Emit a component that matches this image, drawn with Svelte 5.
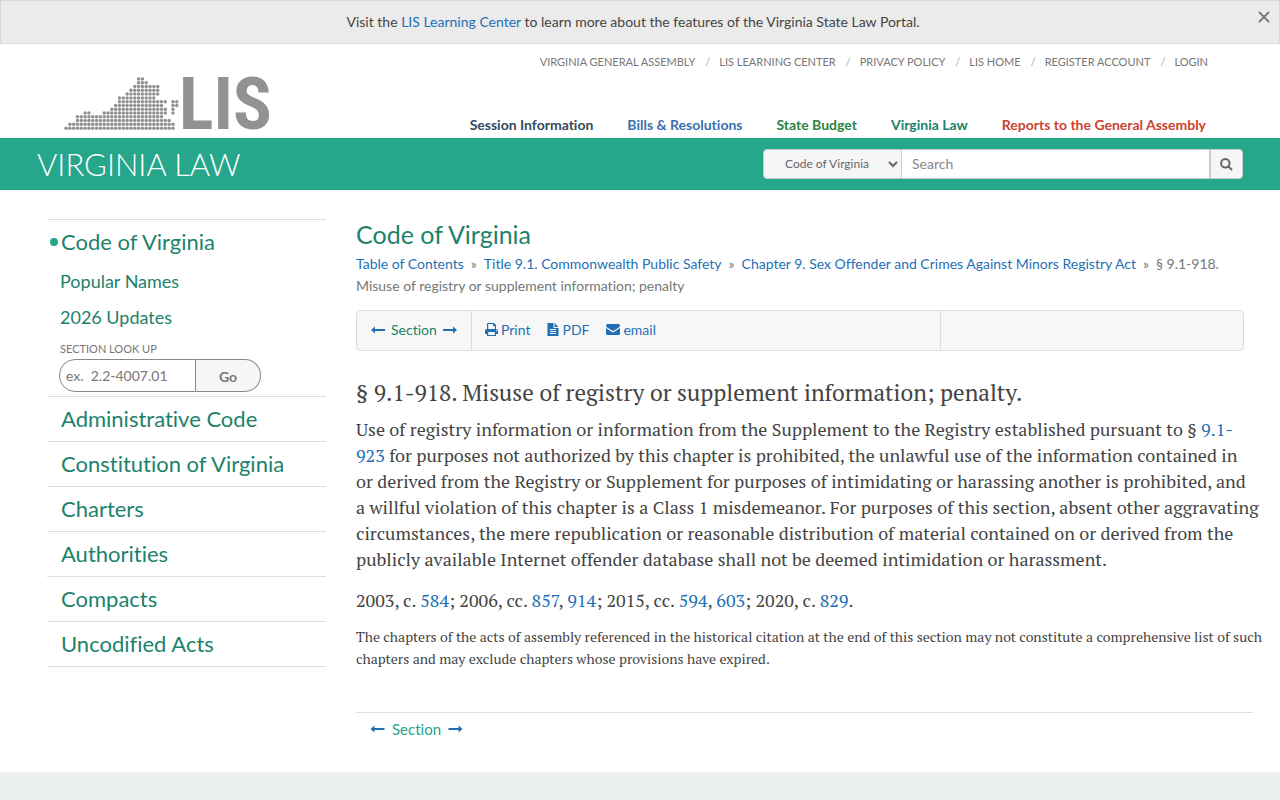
<script>
  const topLinks = [
    'Virginia General Assembly',
    'LIS Learning Center',
    'Privacy Policy',
    'LIS Home',
    'Register Account',
    'Login'
  ];

  const portals = [
    { label: 'Session Information', cls: 'session' },
    { label: 'Bills & Resolutions', cls: 'bills' },
    { label: 'State Budget', cls: 'budget' },
    { label: 'Virginia Law', cls: 'law' },
    { label: 'Reports to the General Assembly', cls: 'reports' }
  ];

  const sections = [
    'Administrative Code',
    'Constitution of Virginia',
    'Charters',
    'Authorities',
    'Compacts',
    'Uncodified Acts'
  ];

  // dotted state map: column ranges for each row, top to bottom
  const mapRows = [
    [[19, 20]],
    [[19, 21]],
    [[18, 24]],
    [[17, 24]],
    [[16, 24]],
    [[14, 23]],
    [[14, 26], [28, 29]],
    [[13, 25], [28, 29]],
    [[12, 26], [28, 28]],
    [[5, 6], [10, 26], [28, 28]],
    [[3, 25]],
    [[3, 27]],
    [[1, 28]],
    [[0, 28]]
  ];

  const dots = mapRows.flatMap((ranges, row) =>
    ranges.flatMap(([from, to]) =>
      Array.from({ length: to - from + 1 }, (_, i) => ({ x: 2 + (from + i) * 3.82, y: 2 + row * 3.78 }))
    )
  );

  let source = $state('Code of Virginia');
  let query = $state('');
  let lookup = $state('');
  let showNotice = $state(true);
</script>

{#snippet arrow(left)}
  <svg class="arrow" viewBox="0 0 14 10" aria-hidden="true">
    <path
      d={left ? 'M0 5l4-3.500V4h10v2H4v2.500z' : 'M14 5l-4-3.500V4H0v2h10v2.500z'}
      fill="currentColor"
    />
  </svg>
{/snippet}

{#if showNotice}
  <div class="notice">
    <p>Visit the <a href="#learning">LIS Learning Center</a> to learn more about the features of the Virginia State Law Portal.</p>
    <button class="close" aria-label="Close" onclick={() => (showNotice = false)}>
      <svg viewBox="0 0 12 12"><path d="M1 1l10 10M11 1L1 11" stroke="currentColor" stroke-width="1.800" /></svg>
    </button>
  </div>
{/if}

<header>
  <a class="logo" href="#home" aria-label="LIS home">
    <svg viewBox="0 0 202 54">
      {#each dots as dot}
        <circle cx={dot.x} cy={dot.y} r="1.75" />
      {/each}
      <text x="115" y="52">LIS</text>
    </svg>
  </a>
  <div class="navs">
    <nav class="top-links">
      {#each topLinks as link}
        <a href="#top">{link}</a>
      {/each}
    </nav>
    <nav class="portals">
      {#each portals as p}
        <a href="#portal" class={p.cls}>{p.label}</a>
      {/each}
    </nav>
  </div>
</header>

<div class="banner">
  <a class="title" href="#law">VIRGINIA LAW</a>
  <form class="search" onsubmit={(e) => e.preventDefault()}>
    <div class="select-wrap">
      <select bind:value={source} aria-label="Search in">
        <option>Code of Virginia</option>
        <option>Administrative Code</option>
        <option>Constitution of Virginia</option>
      </select>
      <svg viewBox="0 0 10 7" aria-hidden="true"><path d="M1 1l4 4 4-4" fill="none" stroke="currentColor" stroke-width="2" /></svg>
    </div>
    <input type="text" placeholder="Search" aria-label="Search" bind:value={query} />
    <button aria-label="Search">
      <svg viewBox="0 0 13 13"><circle cx="5.3" cy="5.3" r="4.2" /><path d="M8.4 8.4l3.6 3.6" /></svg>
    </button>
  </form>
</div>

<div class="page">
  <aside>
    <div class="group current">
      <a class="major active" href="#code">Code of Virginia</a>
      <a class="minor" href="#names">Popular Names</a>
      <a class="minor" href="#updates">2026 Updates</a>
      <form onsubmit={(e) => e.preventDefault()}>
        <label for="lookup">SECTION LOOK UP</label>
        <div class="lookup">
          <input id="lookup" type="text" placeholder="ex.  2.2-4007.01" bind:value={lookup} />
          <button>Go</button>
        </div>
      </form>
    </div>
    {#each sections as s}
      <div class="group"><a class="major" href="#section">{s}</a></div>
    {/each}
  </aside>

  <main>
    <h1>Code of Virginia</h1>
    <div class="crumbs">
      <a href="#toc">Table of Contents</a><span class="sep">»</span><a href="#title">Title 9.1. Commonwealth Public Safety</a><span class="sep">»</span><a href="#chapter">Chapter 9. Sex Offender and Crimes Against Minors Registry Act</a><span class="sep">»</span>§ 9.1-918. Misuse of registry or supplement information; penalty
    </div>

    <div class="toolbar">
      <div class="cell pager">
        <a href="#prev" aria-label="Previous section">{@render arrow(true)}</a>
        <span>Section</span>
        <a href="#next" aria-label="Next section">{@render arrow(false)}</a>
      </div>
      <div class="cell tools">
        <a href="#print">
          <svg viewBox="0 0 13 13" fill="currentColor"><path fill-rule="evenodd" d="M2 6V1q0-1 1-1h6l2 2v4q2 0 2 2v3h-2v2H2v-2H0V8q0-2 2-2zm1.200-5v5h6.600V3H8V1zm0 8v3h6.600V9zM11 7.200v1h1v-1z" /></svg>Print</a>
        <a href="#pdf">
          <svg class="file" viewBox="0 0 11 13" fill="currentColor"><path fill-rule="evenodd" d="M0 0h6v5h5v8H0zm7 0l4 4H7zM2.500 6v1h6V6zm0 2v1h6V8zm0 2v1h6v-1z" /></svg>PDF</a>
        <a href="#email">
          <svg class="mail" viewBox="0 0 14 11" fill="currentColor"><path d="M0 1.500Q0 0 1.500 0h11Q14 0 14 1.500q0 1.200-1.500 2.200L8 6.500q-1 .7-2 0L1.500 3.700Q0 2.700 0 1.500zM0 4l5.500 3.700q1.500 1 3 0L14 4v5.500q0 1.500-1.500 1.500h-11Q0 11 0 9.500z" /></svg>email</a>
      </div>
      <div class="cell"></div>
    </div>

    <article>
      <h2>§ 9.1-918. Misuse of registry or supplement information; penalty.</h2>
      <p>Use of registry information or information from the Supplement to the Registry established pursuant to § <a href="#923">9.1-923</a> for purposes not authorized by this chapter is prohibited, the unlawful use of the information contained in or&nbsp;derived from the Registry or Supplement for purposes of intimidating or harassing another is prohibited, and a&nbsp;willful violation of this chapter is a Class 1 misdemeanor. For purposes of this section, absent other aggravating circumstances, the mere republication or reasonable distribution of material contained on or derived from the publicly available Internet offender database shall not be deemed intimidation or harassment.</p>
      <p class="history">2003, c. <a href="#584">584</a>; 2006, cc. <a href="#857">857</a>, <a href="#914">914</a>; 2015, cc. <a href="#594">594</a>, <a href="#603">603</a>; 2020, c. <a href="#829">829</a>.</p>
      <p class="note">The chapters of the acts of assembly referenced in the historical citation at the end of this section may not constitute a comprehensive list of such chapters and may exclude chapters whose provisions have expired.</p>
    </article>

    <div class="pager bottom">
      <a href="#prev" aria-label="Previous section">{@render arrow(true)}</a>
      <span>Section</span>
      <a href="#next" aria-label="Next section">{@render arrow(false)}</a>
    </div>
  </main>
</div>
<footer></footer>

<style>
  :global(body) {
    background: #fff;
    color: #444;
    font-family: Lato, sans-serif;
    font-size: 14px;
    font-variant-ligatures: none;
    line-height: 22px;
  }
  a {
    color: #1f6fb5;
    text-decoration: none;
  }
  p, h1, h2 { margin: 0; }
  input, button, select {
    box-sizing: border-box;
    margin: 0;
    font-family: inherit;
  }
  input::placeholder { color: #888; opacity: 1; }

  .notice {
    display: flex;
    align-items: flex-start;
    padding: 10px 8px;
    background: #ebebeb;
    border: 1px solid #d8d8d8;
  }
  .notice p {
    flex: 1;
    text-align: center;
  }
  .close {
    display: flex;
    padding: 0 1px;
    background: none;
    border: 0;
    color: #777;
  }
  .close svg { width: 12px; height: 12px; }

  header {
    display: flex;
    justify-content: space-between;
    align-items: flex-end;
    padding: 7px 72px 2px 64px;
  }
  .logo svg {
    display: block;
    width: 202px;
    height: 54px;
    margin-bottom: 5px;
    fill: #929292;
    overflow: visible;
  }
  .logo text {
    font-family: 'Roboto Condensed', 'Liberation Sans Narrow', 'Liberation Sans', sans-serif;
    font-size: 72px;
    font-weight: bold;
  }
  .navs {
    display: flex;
    flex-direction: column;
    align-items: flex-end;
    gap: 41px;
  }
  .top-links {
    display: flex;
    font-size: 11px;
    text-transform: uppercase;
  }
  .top-links a { color: #777; }
  .top-links a + a::before {
    content: '/';
    padding: 0 9px 0 10px;
    color: #aaa;
  }
  .portals {
    display: flex;
    gap: 34px;
    font-weight: bold;
    padding-right: 2px;
  }
  .session { color: #34495e; }
  .bills { color: #3a70b0; }
  .budget { color: #2b8340; }
  .law { color: #1d826c; }
  .reports { color: #cc4130; }

  .banner {
    display: flex;
    justify-content: space-between;
    align-items: center;
    padding: 0 37px;
    height: 52px;
    background: #26a68a;
  }
  .title {
    color: #fff;
    font-size: 31px;
    font-weight: 300;
    line-height: 52px;
  }
  .search {
    display: flex;
    width: 480px;
    height: 30px;
  }
  .select-wrap {
    position: relative;
    width: 139px;
    color: #666;
  }
  .select-wrap svg {
    position: absolute;
    right: 4px;
    top: 12px;
    width: 10px;
    height: 7px;
    pointer-events: none;
  }
  .search select {
    appearance: none;
    width: 100%;
    height: 30px;
    padding: 0 21px 2px;
    border: 1px solid #ccc;
    border-radius: 4px 0 0 4px;
    background: #f6f6f6;
    color: #666;
    font-size: 12px;
  }
  .search input {
    flex: 1;
    min-width: 0;
    padding: 0 10px 2px;
    border: 1px solid #ccc;
    border-left: 0;
    font-size: 14px;
  }
  .search button {
    width: 33px;
    padding: 4px 0 0;
    border: 1px solid #ccc;
    border-radius: 0 4px 4px 0;
    background: #f6f6f6;
    color: #666;
  }
  .search button svg {
    width: 13px;
    height: 13px;
    fill: none;
    stroke: currentColor;
    stroke-width: 2;
  }

  .page {
    display: grid;
    grid-template-columns: 279px 1fr;
    gap: 30px;
    padding: 29px 27px 32px 47px;
  }
  .group {
    padding-left: 14px;
    border-top: 1px solid #ddd;
  }
  .group:last-child { border-bottom: 1px solid #ddd; }
  aside a { color: #1d826c; }
  .major {
    display: block;
    position: relative;
    font-size: 22px;
    line-height: 44px;
  }
  .current { padding-bottom: 4px; }
  .active { margin-bottom: -1px; }
  .active::before {
    content: '';
    position: absolute;
    left: -11px;
    top: 18px;
    width: 8px;
    height: 8px;
    border-radius: 50%;
    background: #26a68a;
  }
  .minor {
    display: block;
    margin-left: -1px;
    font-size: 18px;
    line-height: 36px;
  }
  .group label {
    display: block;
    margin: 4px 0 0 -1px;
    color: #777;
    font-size: 11px;
    line-height: 20px;
  }
  .lookup {
    display: flex;
    width: 202px;
    height: 33px;
    margin-left: -2px;
  }
  .lookup input {
    width: 137px;
    padding: 0 6px;
    border: 1px solid #888;
    border-radius: 16px 0 0 16px;
    font-size: 14px;
  }
  .lookup input::placeholder { color: #777; }
  .lookup button {
    flex: 1;
    padding: 2px 0 0;
    border: 1px solid #888;
    border-left: 0;
    border-radius: 0 16px 16px 0;
    background: #f6f6f6;
    color: #777;
    font-size: 14px;
    font-weight: bold;
  }

  h1 {
    margin-bottom: 4px;
    color: #1d826c;
    font-size: 25px;
    font-weight: normal;
    line-height: 30px;
  }
  .crumbs { color: #777; }
  .sep { padding: 0 7px; }
  .toolbar {
    display: grid;
    grid-template-columns: 114px 1fr 303px;
    height: 39px;
    margin: 13px 9px 0 0;
    border: 1px solid #ddd;
    border-radius: 4px;
    background: #f7f7f7;
  }
  .cell {
    display: flex;
    align-items: center;
    padding-bottom: 2px;
  }
  .cell + .cell { border-left: 1px solid #ddd; }
  .pager {
    display: flex;
    align-items: center;
    gap: 6px;
    padding-left: 14px;
    color: #1d826c;
  }
  .pager a { display: flex; }
  .arrow { width: 14px; height: 10px; }
  .tools {
    gap: 17px;
    padding-left: 13px;
  }
  .tools a {
    display: flex;
    align-items: center;
    gap: 3px;
  }
  .tools svg { width: 13px; height: 13px; }
  .tools .file { width: 12px; }
  .tools .mail { width: 14px; height: 11px; }

  article {
    margin-right: -7px;
    padding-top: 26px;
    font-family: 'PT Serif', 'Liberation Serif', serif;
    font-size: 18px;
    line-height: 26px;
  }
  h2 {
    margin-bottom: 7px;
    font-size: 23px;
    font-weight: normal;
    line-height: 32px;
  }
  article p { margin-bottom: 15px; }
  article .history { margin-bottom: 13px; }
  article .note {
    margin-right: -5px;
    font-size: 14px;
    line-height: 22px;
  }
  .bottom {
    gap: 7px;
    margin-top: 42px;
    padding-top: 5px;
    border-top: 1px solid #ddd;
    color: #26a68a;
    font-size: 15px;
  }
  .bottom .arrow { width: 15px; }
  footer {
    height: 28px;
    background: #ecf0f1;
  }
</style>
